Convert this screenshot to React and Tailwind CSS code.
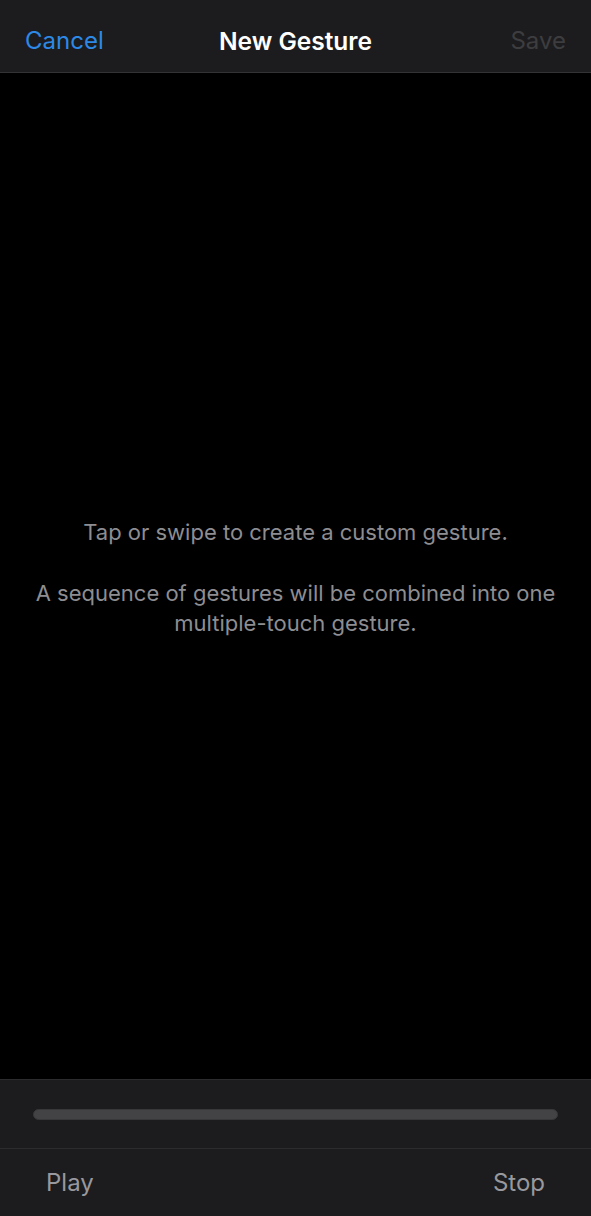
export default function App() {
  return (
    <div
      className="flex h-[1216px] w-[591px] flex-col bg-black"
      style={{ fontFamily: 'Inter, "Noto Sans", sans-serif' }}
    >
      {/* Nav bar */}
      <div className="grid h-[73px] shrink-0 grid-cols-[1fr_auto_1fr] items-center border-b border-[#333335] bg-[#1c1c1e] px-[25px] pt-[10px]">
        <button className="justify-self-start text-[24px] text-[#2d89e6]">Cancel</button>
        <h1 className="text-[24.5px] font-semibold text-white">New Gesture</h1>
        <button className="justify-self-end text-[24px] text-[#3d3d40]">Save</button>
      </div>

      {/* Canvas */}
      <div className="flex flex-1 flex-col items-center justify-center px-6 pt-[2px] text-center text-[22px] leading-[30px] text-[#8d8d92]">
        <p>Tap or swipe to create a custom gesture.</p>
        <p className="mt-[31px]">
          A sequence of gestures will be combined into one
          <br />
          multiple-touch gesture.
        </p>
      </div>

      {/* Timeline */}
      <div className="flex h-[69px] shrink-0 items-center border-t border-[#2c2c2e] bg-[#1c1c1e] px-[33px]">
        <div className="h-[11px] w-full rounded-full border border-[#38383b] bg-[#434346]" />
      </div>

      {/* Controls */}
      <div className="flex h-[68px] shrink-0 items-center justify-between border-t border-[#2c2c2e] bg-[#1c1c1e] px-[46px]">
        <button className="text-[24px] text-[#98989d]">Play</button>
        <button className="text-[24px] text-[#98989d]">Stop</button>
      </div>
    </div>
  );
}
